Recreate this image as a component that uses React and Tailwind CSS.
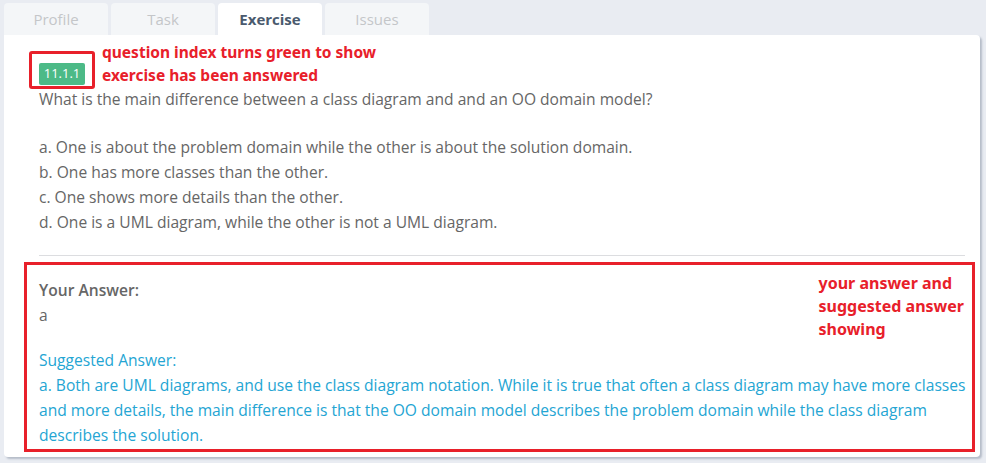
import React from 'react';

const tabs = ['Profile', 'Task', 'Exercise', 'Issues'];

const options = [
  'a. One is about the problem domain while the other is about the solution domain.',
  'b. One has more classes than the other.',
  'c. One shows more details than the other.',
  'd. One is a UML diagram, while the other is not a UML diagram.',
];

export default function App() {
  return (
    <div className="h-[463px] bg-[#e9ecf2] pt-[3px] px-[4px] overflow-hidden" style={{ fontFamily: '"Open Sans", sans-serif' }}>
      <div className="flex gap-[3px]">
        {tabs.map((t) => (
          <div
            key={t}
            className={`w-[104px] h-[32px] rounded-t-[4px] flex items-center justify-center text-[15px] ${
              t === 'Exercise' ? 'bg-white text-[#4a5a6e] font-bold' : 'bg-[#f4f6f8] text-[#c4c6c9]'
            }`}
          >
            {t}
          </div>
        ))}
      </div>

      <div className="relative w-[976px] h-[422px] bg-white rounded-b-[4px] rounded-tr-[4px] shadow-[2px_2px_2px_rgba(120,130,150,0.45)] pt-[25px] pl-[35px] pr-[15px]">
        {/* annotation: index */}
        <div className="absolute left-[25px] top-[16px] w-[66px] h-[38px] border-[3px] border-[#e8202a] rounded-[3px]" />
        <div className="absolute left-[98px] top-[6px] text-[#e8202a] font-bold text-[15.5px] leading-[23px]" style={{ fontFamily: '"Noto Sans", sans-serif' }}>
          <div>question index turns green to show</div>
          <div>exercise has been answered</div>
        </div>

        <span className="inline-flex items-center justify-center w-[46px] h-[22px] bg-[#4cba87] text-white text-[13px] rounded-[2px]">11.1.1</span>

        <div className="mt-[2px] text-[15.6px] leading-[25px] text-[#666]">
          <p>What is the main difference between a class diagram and and an OO domain model?</p>
          <div className="mt-[23px]">
            {options.map((o) => (
              <p key={o}>{o}</p>
            ))}
          </div>
        </div>

        <div className="mt-[20px] h-px bg-[#dcdde0]" />

        <div className="relative mt-[6px] -ml-[15px] -mr-[10px] border-[3px] border-[#e8202a] pl-[12px] pt-[13px] pb-[1px] text-[15.6px] leading-[25px]">
          <div className="absolute right-[8px] top-[7px] text-[#e8202a] font-bold text-[16px] leading-[23px]" style={{ fontFamily: '"Noto Sans", sans-serif' }}>
            <div>your answer and</div>
            <div>suggested answer</div>
            <div>showing</div>
          </div>
          <p className="text-[#666] font-semibold">Your Answer:</p>
          <p className="text-[#666]">a</p>
          <p className="mt-[20px] text-[#24a5d3]">Suggested Answer:</p>
          <p className="text-[#24a5d3]">
            a. Both are UML diagrams, and use the class diagram notation. While it is true that often a class diagram may have more classes and more details, the main difference is that the OO domain model describes the problem domain while the class diagram describes the solution.
          </p>
        </div>
      </div>
    </div>
  );
}
